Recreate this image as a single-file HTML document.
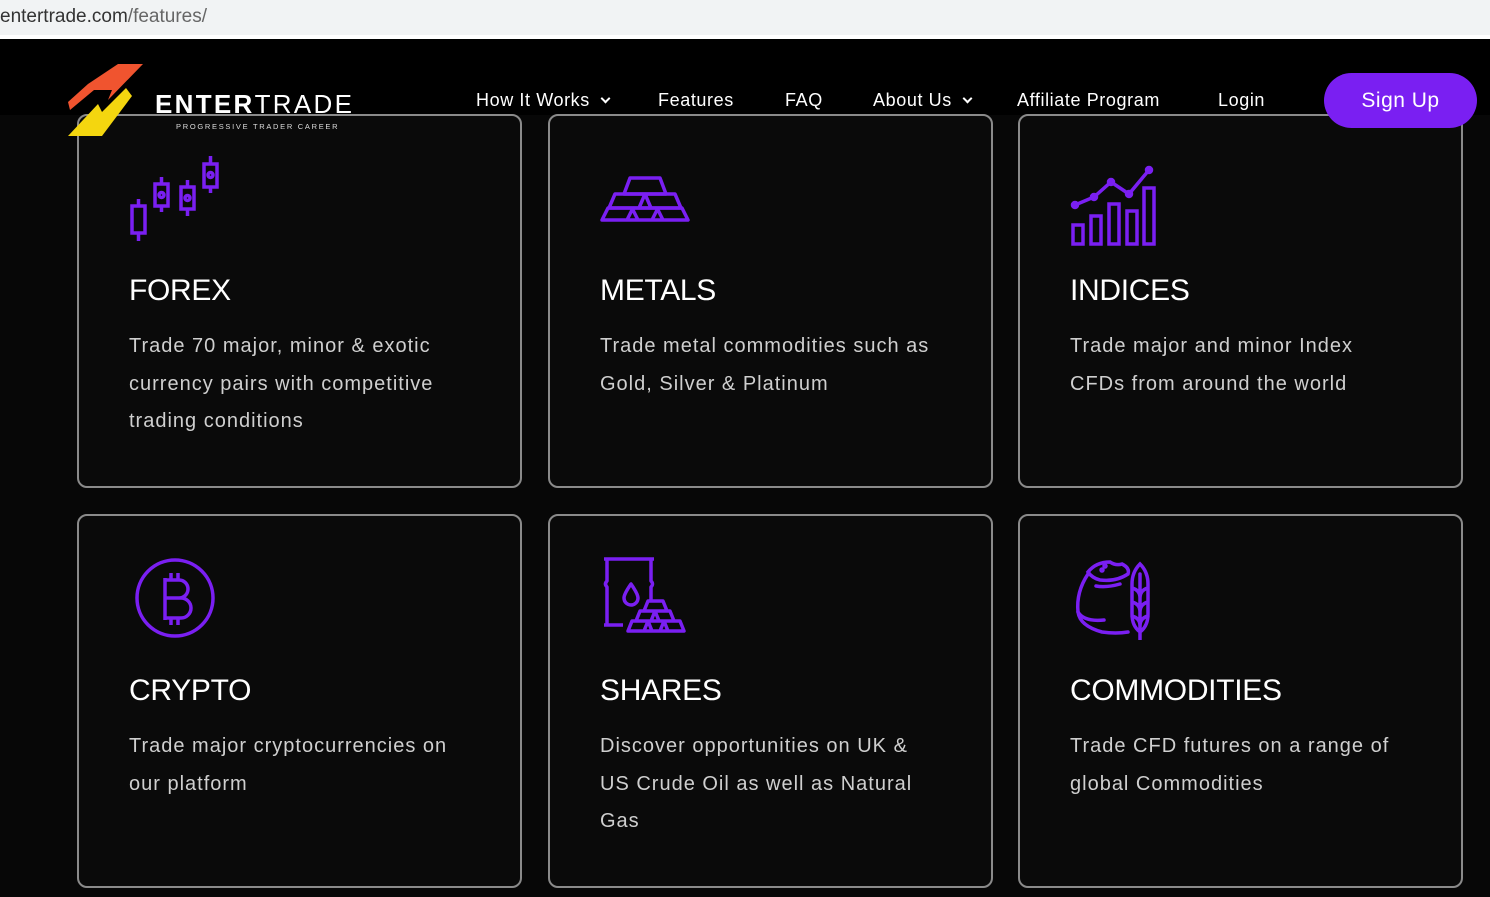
<!DOCTYPE html>
<html><head><meta charset="utf-8"><style>
*{margin:0;padding:0;box-sizing:border-box}
body{width:1490px;height:897px;overflow:hidden;background:#070707;font-family:"Liberation Sans",sans-serif;position:relative;color:#fff}
.bar{position:absolute;left:0;top:0;width:1490px;height:35px;background:#f1f3f4;color:#333;font-size:19px;line-height:33px}
.bar span{color:#666}
.line{position:absolute;left:0;top:35px;width:1490px;height:4px;background:#fff}
.hdr{position:absolute;left:0;top:39px;width:1490px;height:76px;background:#000}
.card{position:absolute;width:445px;height:374px;border:2px solid #8a8a8a;border-radius:10px;background:#0a0a0a}
.card h2{position:absolute;left:50px;top:158px;font-size:30px;font-weight:normal;letter-spacing:-0.3px}
.card p{position:absolute;left:50px;top:212px;width:335px;font-size:20px;line-height:37.5px;color:#cfcfcf;letter-spacing:1px}
.card svg{position:absolute}
.nav{position:absolute;top:90px;font-size:18px;color:#fff;letter-spacing:0.6px}
.chev{display:inline-block;width:7px;height:7px;border-right:2px solid #fff;border-bottom:2px solid #fff;transform:rotate(45deg);margin-left:12px;position:relative;top:-4px}
.btn{position:absolute;left:1324px;top:73px;width:153px;height:55px;border-radius:28px;background:#7a1ff2;color:#fff;font-size:21px;text-align:center;line-height:55px;letter-spacing:0.5px}
</style></head><body>
<div class="bar">entertrade.com<span>/features/</span></div>
<div class="line"></div>
<div class="hdr"></div>

<div class="card" style="left:77px;top:114px">
<svg style="left:50px;top:38px" width="92" height="90" viewBox="0 0 92 90" fill="none" stroke="#7a1ff2" stroke-width="3.5">
<rect x="3" y="52" width="13" height="27"/><path d="M9.5 45v7M9.5 79v8"/>
<rect x="26" y="30" width="13" height="22"/><path d="M32.5 23v7M32.5 52v6"/><circle cx="32.5" cy="41" r="2.5"/>
<rect x="52" y="33" width="13" height="22"/><path d="M58.5 26v7M58.5 55v7"/><circle cx="58.5" cy="44" r="2.5"/>
<rect x="75" y="10" width="13" height="23"/><path d="M81.5 2v8M81.5 33v6"/><circle cx="81.5" cy="21" r="2.5"/>
</svg>
<h2>FOREX</h2><p>Trade 70 major, minor &amp; exotic currency pairs with competitive trading conditions</p></div>

<div class="card" style="left:548px;top:114px">
<svg style="left:50px;top:60px" width="90" height="46" viewBox="0 0 90 46" fill="none" stroke="#7a1ff2" stroke-width="3.5" stroke-linejoin="round">
<path d="M30 2h30l6 16H24z"/><path d="M15 18h30l6 14H9zM45 18h30l6 14H39z"/><path d="M8 32h24l6 12H2zM33 32h24l6 12H27zM58 32h24l6 12H52z"/>
</svg>
<h2>METALS</h2><p>Trade metal commodities such as Gold, Silver &amp; Platinum</p></div>

<div class="card" style="left:1018px;top:114px">
<svg style="left:50px;top:38px" width="90" height="92" viewBox="0 0 90 92" fill="none" stroke="#7a1ff2" stroke-width="3.5">
<path d="M5 51l19-8 17-15 18 12 20-24"/><circle cx="5" cy="51" r="2.5" fill="#7a1ff2"/><circle cx="24" cy="43" r="2.5" fill="#7a1ff2"/><circle cx="41" cy="28" r="2.5" fill="#7a1ff2"/><circle cx="59" cy="40" r="2.5" fill="#7a1ff2"/><circle cx="79" cy="16" r="2.5" fill="#7a1ff2"/>
<rect x="3" y="71" width="10" height="19"/><rect x="21" y="62" width="10" height="28"/><rect x="39" y="50" width="10" height="40"/><rect x="57" y="57" width="10" height="33"/><rect x="74" y="34" width="10" height="56"/>
</svg>
<h2>INDICES</h2><p>Trade major and minor Index CFDs from around the world</p></div>

<div class="card" style="left:77px;top:514px">
<svg style="left:54px;top:40px" width="84" height="84" viewBox="0 0 84 84" fill="none" stroke="#7a1ff2" stroke-width="3.5">
<circle cx="42" cy="42" r="38"/><path d="M32 24h14a9 9 0 0 1 0 18H32zM32 42h16a10 10 0 0 1 0 20H32zM32 22v42M38 17v7M45 17v7M38 62v7M45 62v7"/>
</svg>
<h2>CRYPTO</h2><p>Trade major cryptocurrencies on our platform</p></div>

<div class="card" style="left:548px;top:514px">
<svg style="left:52px;top:40px" width="86" height="84" viewBox="0 0 86 84" fill="none" stroke="#7a1ff2" stroke-width="3.5" stroke-linejoin="round">
<path d="M2 3h50M5 3v22q-3 3 0 6v38M2 69h19M49 3v22q3 3 0 6v14M5 69h16"/><path d="M29 28q-7 10-7 14a7 7 0 0 0 14 0q0-4-7-14z"/>
<path d="M46 45h15l4 10H42zM38 55h15l4 10H34zM53 55h15l4 10H49zM30 65h16l4 10H26zM46 65h16l4 10H42zM62 65h16l4 10H58z"/>
</svg>
<h2>SHARES</h2><p>Discover opportunities on UK &amp; US Crude Oil as well as Natural Gas</p></div>

<div class="card" style="left:1018px;top:514px">
<svg style="left:54px;top:40px" width="84" height="84" viewBox="0 0 84 84" fill="none" stroke="#7a1ff2" stroke-width="3.5" stroke-linecap="round">
<path d="M14 16q8-10 22-10q6 4 12 2q8 4 6 10q-12 8-28 6q-8-2-12-8z"/><circle cx="28" cy="14" r="1" fill="#7a1ff2"/><circle cx="31" cy="10" r="1" fill="#7a1ff2"/>
<path d="M14 18q-12 18-10 38q2 14 24 20q14 2 26 0"/><path d="M4 56q6 10 26 8"/><path d="M22 30q10 2 24-2"/>
<path d="M66 8q-8 8-8 20v30q0 12 8 18q8-6 8-18V28q0-12-8-20zM66 18v66M58 32q8 2 8 10M74 32q-8 2-8 10M58 46q8 2 8 10M74 46q-8 2-8 10M58 60q8 2 8 10M74 60q-8 2-8 10"/>
</svg>
<h2>COMMODITIES</h2><p>Trade CFD futures on a range of global Commodities</p></div>

<svg style="position:absolute;left:68px;top:64px" width="76" height="74" viewBox="0 0 76 74">
<path d="M50 0h25L40 36l4-10H26L2 46l-2-8L20 20z" fill="#f0542f"/>
<path d="M58 24l6 8L34 72H0l30-32 4 8z" fill="#f4d60f"/>
</svg>
<div style="position:absolute;left:155px;top:89px;font-size:26px;letter-spacing:2.3px;color:#fff"><b>ENTER</b>TRADE</div>
<div style="position:absolute;left:176px;top:122px;font-size:7.5px;letter-spacing:1.7px;color:#ddd">PROGRESSIVE TRADER CAREER</div>

<div class="nav" style="left:476px">How It Works<span class="chev"></span></div>
<div class="nav" style="left:658px">Features</div>
<div class="nav" style="left:785px">FAQ</div>
<div class="nav" style="left:873px">About Us<span class="chev"></span></div>
<div class="nav" style="left:1017px">Affiliate Program</div>
<div class="nav" style="left:1218px">Login</div>
<div class="btn">Sign Up</div>
</body></html>
